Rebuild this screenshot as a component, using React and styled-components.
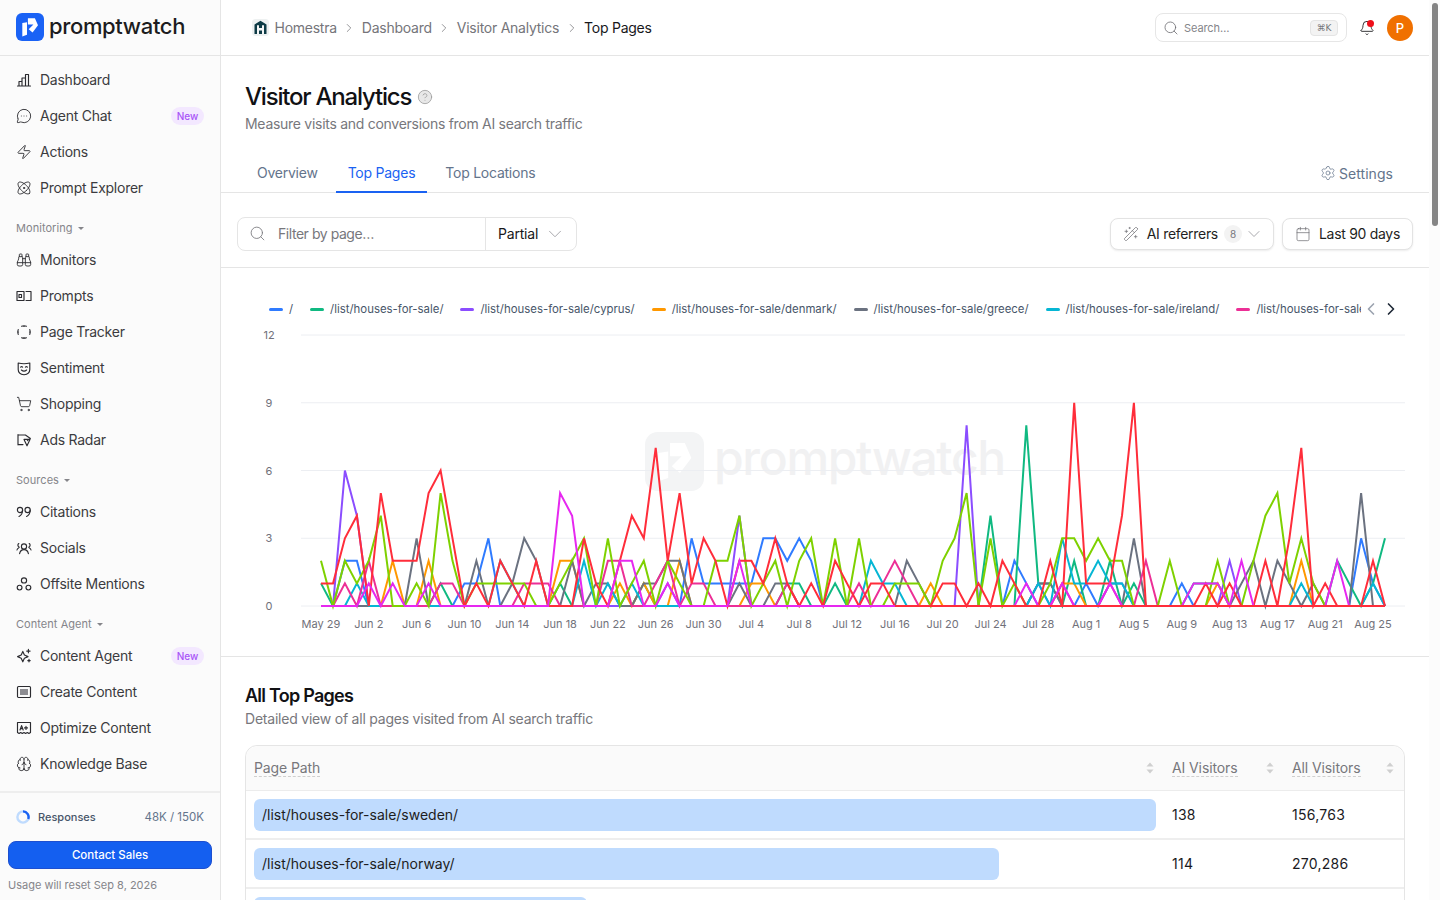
import React from 'react'
import styled, { createGlobalStyle } from 'styled-components'
import {
  Atom, Bell, Binoculars, Brain, Calendar, ChevronDown, ChevronLeft, ChevronRight,
  CircleHelp, MessageCircleMore, Search, Settings, ShoppingCart, WandSparkles, Zap,
} from 'lucide-react'

const GlobalStyle = createGlobalStyle`
  html, body { margin: 0; height: 100%; overflow: hidden; }
  body { font-family: Inter, "Liberation Sans", sans-serif; color: #18181b; background: #fff; -webkit-font-smoothing: antialiased; }
  * { box-sizing: border-box; }
`

const Shell = styled.div`
  display: flex;
  height: 100vh;
`

const Sidebar = styled.aside`
  width: 221px;
  flex: none;
  display: flex;
  flex-direction: column;
  background: #fbfbfb;
  border-right: 1px solid #e5e5e5;
`

const Brand = styled.div`
  height: 56px;
  flex: none;
  display: flex;
  align-items: center;
  gap: 5px;
  padding: 0 0 2px 16px;
  border-bottom: 1px solid #e5e5e5;
`

const BrandName = styled.span`
  margin-bottom: 1px;
  font-size: 22px;
  font-weight: 500;
  letter-spacing: -0.35px;
  color: #1c1c20;
`

const Nav = styled.nav`
  flex: 1;
  padding: 6px 8px 0;
`

const NavItem = styled.div`
  height: 36px;
  display: flex;
  align-items: center;
  gap: 8px;
  padding: 0 8px 1px;
  font-size: 14px;
  letter-spacing: -0.25px;
  color: #3b3b40;
  svg { flex: none; color: #2b2b30; }
`

const NavLabel = styled.span`
  flex: 1;
`

const NewBadge = styled.span`
  width: 33px;
  height: 18px;
  border-radius: 9px;
  display: flex;
  align-items: center;
  justify-content: center;
  font-size: 10px;
  font-weight: 500;
  letter-spacing: 0;
  color: #a855f7;
  background: #f3e8ff;
`

const GroupLabel = styled.div`
  height: 36px;
  padding: 14px 0 0 8px;
  display: flex;
  align-items: flex-start;
  gap: 5px;
  font-size: 11px;
  line-height: 16px;
  letter-spacing: 0.05px;
  color: #85858a;
`

const Caret = styled.i`
  margin-top: 7px;
  border: 3px solid transparent;
  border-top: 3px solid #85858a;
  border-bottom: 0;
`

const SideFoot = styled.div`
  flex: none;
  height: 109px;
  padding: 14px 8px 0;
  border-top: 2px solid #eeeeee;
`

const UsageRow = styled.div`
  height: 20px;
  display: flex;
  align-items: center;
  gap: 8px;
  padding: 0 8px;
  font-size: 11.5px;
  color: #64748b;
`

const UsageName = styled.span`
  flex: 1;
  font-size: 11px;
  font-weight: 500;
  color: #475569;
`

const ContactButton = styled.button`
  display: block;
  width: 100%;
  height: 28px;
  margin-top: 14px;
  border: 1px solid #1d4fd0;
  border-radius: 8px;
  background: #145ff0;
  color: #fff;
  font: 500 11.5px Inter, sans-serif;
`

const ResetNote = styled.div`
  margin-top: 8px;
  font-size: 11px;
  line-height: 16px;
  color: #85858a;
`

const Main = styled.main`
  flex: 1;
  min-width: 0;
  display: flex;
  overflow: hidden;
`

const Page = styled.div`
  flex: 1;
  min-width: 0;
`

const ScrollRail = styled.div`
  flex: none;
  width: 11px;
  padding: 3px 2px 0 3px;
  background: #fcfcfc;
`

const ScrollThumb = styled.div`
  height: 223px;
  border-radius: 3px;
  background: #858585;
`

const TopBar = styled.header`
  height: 56px;
  display: flex;
  align-items: center;
  padding: 0 16px 0 31px;
  border-bottom: 1px solid #e5e5e5;
`

const Crumbs = styled.div`
  flex: 1;
  display: flex;
  align-items: center;
  gap: 5.5px;
  font-size: 14px;
  letter-spacing: -0.25px;
  color: #75757a;
  svg { color: #75757a; }
`

const Crumb = styled.span`
  color: ${p => (p.$current ? '#18181b' : '#75757a')};
`

const SearchBox = styled.div`
  width: 192px;
  height: 29px;
  display: flex;
  align-items: center;
  gap: 5px;
  padding: 0 8px 0 7px;
  border: 1px solid #e6e6e6;
  border-radius: 8px;
  font-size: 11px;
  letter-spacing: -0.1px;
  color: #85858a;
  svg { color: #6b6b70; }
`

const SearchText = styled.span`
  flex: 1;
`

const Kbd = styled.kbd`
  width: 28px;
  height: 16px;
  border: 1px solid #e4e4e4;
  border-radius: 4px;
  background: #f3f3f3;
  font: 500 9px "DejaVu Sans", sans-serif;
  line-height: 14px;
  text-align: center;
  color: #75757a;
`

const BellWrap = styled.div`
  position: relative;
  width: 16px;
  height: 16px;
  margin: 0 12px;
  svg { display: block; }
`

const BellDot = styled.i`
  position: absolute;
  top: 0;
  right: 1px;
  width: 7px;
  height: 7px;
  border-radius: 50%;
  background: #ef0f1a;
`

const Avatar = styled.div`
  width: 26px;
  height: 26px;
  border-radius: 50%;
  background: #f07000;
  color: #fff;
  font-size: 13px;
  font-weight: 500;
  display: flex;
  align-items: center;
  justify-content: center;
`

const PageHead = styled.section`
  padding: 25px 24px 0;
`

const TitleRow = styled.div`
  display: flex;
  align-items: center;
  gap: 6px;
  svg { color: #9a9a9a; fill: #e8e8e8; }
`

const Title = styled.h1`
  margin: 0;
  font-size: 24px;
  line-height: 32px;
  font-weight: 500;
  letter-spacing: -1.2px;
  color: #111114;
`

const Sub = styled.p`
  margin: 1px 0 0;
  font-size: 14px;
  line-height: 20px;
  letter-spacing: -0.28px;
  color: #77777c;
`

const SectionSub = styled(Sub)`
  letter-spacing: -0.22px;
`

const TabBar = styled.div`
  margin-top: 22px;
  height: 37px;
  display: flex;
  align-items: flex-start;
  gap: 6px;
  padding: 0 36px 0 24px;
  border-bottom: 1px solid #e5e5e5;
`

const Tab = styled.div`
  height: 37px;
  padding: 0 12px 2px;
  display: flex;
  align-items: center;
  font-size: 14px;
  letter-spacing: -0.24px;
  color: ${p => (p.$active ? '#1a62f2' : '#64748b')};
  border-bottom: 2px solid ${p => (p.$active ? '#1a62f2' : 'transparent')};
`

const SettingsLink = styled.div`
  margin-left: auto;
  height: 34px;
  display: flex;
  align-items: center;
  gap: 3px;
  font-size: 14px;
  letter-spacing: 0.05px;
  color: #64748b;
`

const FilterRow = styled.div`
  height: 75px;
  padding: 8px 16px 0;
  display: flex;
  align-items: center;
  gap: 8px;
  border-bottom: 1px solid #e5e5e5;
`

const FilterBox = styled.div`
  width: 340px;
  height: 34px;
  margin-right: auto;
  display: flex;
  align-items: center;
  border: 1px solid #e5e5e5;
  border-radius: 8px;
  font-size: 14px;
  letter-spacing: -0.2px;
`

const FilterInput = styled.div`
  width: 248px;
  height: 100%;
  display: flex;
  align-items: center;
  gap: 12px;
  padding: 0 0 1px 11px;
  letter-spacing: -0.45px;
  color: #77777c;
  border-right: 1px solid #e5e5e5;
  svg { color: #77777c; }
`

const MatchSelect = styled.div`
  flex: 1;
  display: flex;
  align-items: center;
  justify-content: space-between;
  padding: 0 10px 1px 12px;
  svg { color: #a0a0a5; }
`

const ToolButton = styled.div`
  height: 32px;
  display: flex;
  align-items: center;
  gap: 8px;
  padding: 0 12px 1px;
  border: 1px solid #e3e3e3;
  border-radius: 8px;
  background: #fff;
  box-shadow: 0 1px 2px rgba(0, 0, 0, 0.08);
  font-size: 14px;
  letter-spacing: -0.3px;
  color: #1f1f23;
  svg { color: #6f6f74; }
`

const CountPill = styled.span`
  width: 18px;
  height: 18px;
  margin-left: -2px;
  border-radius: 50%;
  background: #f3f3f3;
  font-size: 10px;
  line-height: 18px;
  text-align: center;
  color: #77777c;
`

const ButtonChevron = styled(ChevronDown)`
  margin: 0 -3px 0 -6px;
  color: #a0a0a5 !important;
`

const ChartSection = styled.section`
  position: relative;
  padding: 30px 0 16px;
  border-bottom: 1px solid #e5e5e5;
`

const LegendRow = styled.div`
  height: 22px;
  margin-left: 48px;
  display: flex;
  align-items: center;
`

const LegendClip = styled.div`
  flex: none;
  width: 1092px;
  overflow: hidden;
  display: flex;
  align-items: center;
  gap: 17px;
`

const LegendItem = styled.div`
  flex: none;
  display: flex;
  align-items: center;
  gap: 6px;
  font-size: 11.4px;
  color: #475569;
`

const LegendDash = styled.i`
  width: 14px;
  height: 3px;
  border-radius: 2px;
  background: ${p => p.$color};
`

const LegendArrows = styled.div`
  display: flex;
`

const Watermark = styled.div`
  position: absolute;
  left: 424px;
  top: 164px;
  display: flex;
  align-items: center;
  gap: 10px;
  font-size: 48px;
  font-weight: 500;
  letter-spacing: -1.3px;
  color: #f1f1f2;
`

const WatermarkName = styled.span`
  margin-top: -8px;
`

const ChartSvg = styled.svg`
  position: relative;
  display: block;
  margin-top: 5px;
  text {
    font-family: Inter, "Liberation Sans", sans-serif;
    font-size: 11px;
    fill: #71717a;
  }
`

const TableSection = styled.section`
  padding: 27px 24px 0;
`

const SectionTitle = styled.h2`
  margin: 0;
  font-size: 18px;
  line-height: 24px;
  font-weight: 600;
  letter-spacing: -0.75px;
  color: #111114;
`

const Table = styled.div`
  margin-top: 16px;
  border: 1px solid #e5e5e5;
  border-radius: 12px 12px 0 0;
`

const HeadRow = styled.div`
  display: grid;
  grid-template-columns: 1fr 120px 120px;
  height: 45px;
  background: #fafafa;
  border-radius: 12px 12px 0 0;
  border-bottom: 1px solid #ececec;
`

const HeadCell = styled.div`
  display: flex;
  align-items: center;
  justify-content: space-between;
  padding: 0 10px 0 8px;
  font-size: 14px;
  letter-spacing: -0.1px;
  color: #77777c;
`

const HeadLabel = styled.span`
  line-height: 17px;
  border-bottom: 1px dashed #cfcfcf;
`

const BodyRow = styled.div`
  display: grid;
  grid-template-columns: 1fr 120px 120px;
  height: 49px;
  align-items: center;
  border-bottom: 2px solid #eeeeee;
  font-size: 14px;
`

const BarCell = styled.div`
  padding: 0 8px;
`

const PathBar = styled.div`
  height: 32px;
  padding-left: 8px;
  display: flex;
  align-items: center;
  white-space: nowrap;
  border-radius: 6px;
  background: #bfdbfe;
  color: #1d1d21;
`

const NumCell = styled.div`
  padding-left: 8px;
  letter-spacing: 0.25px;
  color: #1a1a1e;
`

const stroke = { fill: 'none', stroke: 'currentColor', strokeWidth: 1.15, strokeLinecap: 'round', strokeLinejoin: 'round' }

function Ico({ children }) {
  return <svg width="16" height="16" viewBox="0 0 16 16" {...stroke}>{children}</svg>
}

const BarsIcon = () => <Ico><path d="M1.5 14h13M3 14V9.5h3V14M6 14V6h3.5v8M9.5 14V2.5h3V14" /></Ico>
const PromptsIcon = () => <Ico><path d="M1 3.5h7v9H1zM10 3.5h5M15 3.5v9M10 12.5h5" /><rect x="3" y="6.5" width="2.5" height="3" /></Ico>
const TrackerIcon = () => <Ico><path d="M5.6 2.2a6.3 6.3 0 0 1 4.8 0M13.8 5.6a6.3 6.3 0 0 1 0 4.8M10.4 13.8a6.3 6.3 0 0 1-4.8 0M2.2 10.4a6.3 6.3 0 0 1 0-4.8M8 1.7v.8M8 13.5v.8M1.7 8h.8M13.5 8h.8" /></Ico>
const MaskIcon = () => <Ico><path d="M2.2 3c3.8 1 7.8 1 11.6 0v6.4c0 3-2.6 4.9-5.8 5.3-3.2-.4-5.8-2.3-5.8-5.3z" /><path d="M4.6 7.2c.6-.6 1.4-.6 2 0M9.4 7.2c.6-.6 1.4-.6 2 0M5.4 10c1.6 1.4 3.6 1.4 5.2 0" /></Ico>
const CartIcon = () => <ShoppingCart size={16} strokeWidth={1.35} />
const RadarIcon = () => <Ico><path d="M2 2.6v10.2M2 3h7.4l5 3.4-3 2.2M2 12.6h5" /><path d="M8 7.4h6l-3 6.4z" /></Ico>
const QuoteIcon = () => <Ico><circle cx="4" cy="6" r="2.6" /><path d="M6.6 6c0 3-1.4 5.4-3.6 6.4" /><circle cx="11.6" cy="6" r="2.6" /><path d="M14.2 6c0 3-1.4 5.4-3.6 6.4" /></Ico>
const SocialIcon = () => <Ico><circle cx="8" cy="6.4" r="2.6" /><path d="M3.6 13.6c.6-3 2.4-4 4.4-4s3.8 1 4.4 4M3.4 7.2a2 2 0 0 1-.6-3.6M1 10c.2-1 .8-1.7 1.6-2M12.6 7.2a2 2 0 0 0 .6-3.6M15 10c-.2-1-.8-1.7-1.6-2" /></Ico>
const NodesIcon = () => <Ico><circle cx="8" cy="4.4" r="2.6" /><circle cx="3.6" cy="11.6" r="2.4" /><circle cx="12.4" cy="11.6" r="2.4" /></Ico>
const StarIcon = () => <Ico><path d="M6.8 3.4 8.4 7l3.6 1.6-3.6 1.6-1.6 3.6-1.6-3.6L1.6 8.6 5.2 7z" /><path d="M12.4 1.4v3.4M10.7 3.1h3.4M13 11.4v2.4M11.8 12.6h2.4" /></Ico>
const CreateIcon = () => <Ico><rect x="1.5" y="2.5" width="13" height="11" rx="1" /><rect x="4" y="5" width="8" height="6" fill="#8d8d92" stroke="none" /></Ico>
const OptimizeIcon = () => <Ico><path d="M1.5 12.2V2.5h13v9.7M1.5 12.5l1.6 1 1.6-1 1.6 1 1.7-1 1.6 1 1.7-1 1.6 1 1.6-1" /><path d="M4 10l1.6-4.4L7.2 10M4.6 8.6h2M10 6.4v3M8.5 7.9h3" /></Ico>

const LogoMark = ({ size, tile, glyph }) => (
  <svg width={size} height={size} viewBox="0 0 28 28">
    <rect width="28" height="28" rx="6" fill={tile} />
    <path d="M11.9 5.2h7l3.1 7.1-5.4 7.2-3.9-3.2 4.7-4.8h-5.5z" fill={glyph} />
    <path d="M6.3 10l4.7-.8v12.6l-4.7 1.6z" fill={glyph} />
  </svg>
)

const HomeTile = () => (
  <svg width="17" height="17" viewBox="0 0 17 17">
    <rect width="17" height="17" rx="3.5" fill="#eef1f1" />
    <path d="M2.5 5.6 8.5 1.8l6 3.8v9.4h-12z" fill="#0e3b46" />
    <path d="M5 6.2h2v2.9h3V6.2h2V15h-2v-3.4H7V15H5z" fill="#f4f6f6" />
  </svg>
)

const SortIcon = () => (
  <svg width="8" height="12" viewBox="0 0 8 12"><path d="M4 .5 7.5 4.5h-7zM4 11.5.5 7.5h7z" fill="#cfcfcf" /></svg>
)

const UsageRing = () => (
  <svg width="14" height="14" viewBox="0 0 14 14" fill="none">
    <circle cx="7" cy="7" r="5.6" stroke="#bfdbfe" strokeWidth="2.4" />
    <path d="M7 1.4A5.6 5.6 0 0 1 12.2 9" stroke="#1a62f2" strokeWidth="2.4" />
  </svg>
)

const navGroups = [
  { items: [
    [<BarsIcon />, 'Dashboard'],
    [<MessageCircleMore size={16} strokeWidth={1.35} />, 'Agent Chat', true],
    [<Zap size={16} strokeWidth={1.35} />, 'Actions'],
    [<Atom size={16} strokeWidth={1.35} />, 'Prompt Explorer'],
  ] },
  { label: 'Monitoring', items: [
    [<Binoculars size={16} strokeWidth={1.35} />, 'Monitors'],
    [<PromptsIcon />, 'Prompts'],
    [<TrackerIcon />, 'Page Tracker'],
    [<MaskIcon />, 'Sentiment'],
    [<CartIcon />, 'Shopping'],
    [<RadarIcon />, 'Ads Radar'],
  ] },
  { label: 'Sources', items: [
    [<QuoteIcon />, 'Citations'],
    [<SocialIcon />, 'Socials'],
    [<NodesIcon />, 'Offsite Mentions'],
  ] },
  { label: 'Content Agent', items: [
    [<StarIcon />, 'Content Agent', true],
    [<CreateIcon />, 'Create Content'],
    [<OptimizeIcon />, 'Optimize Content'],
    [<Brain size={16} strokeWidth={1.35} />, 'Knowledge Base'],
  ] },
]

const legend = [
  ['/', '#2f7bff'],
  ['/list/houses-for-sale/', '#10b981'],
  ['/list/houses-for-sale/cyprus/', '#8b4dff'],
  ['/list/houses-for-sale/denmark/', '#ff9800'],
  ['/list/houses-for-sale/greece/', '#6b7280'],
  ['/list/houses-for-sale/ireland/', '#06b6d4'],
  ['/list/houses-for-sale/italy/', '#ec2f96'],
]

// visits per day, only the non-zero days are listed
const series = [
  ['#2f7bff', { 2: 2, 3: 2, 12: 1, 13: 1, 14: 3, 31: 3, 32: 1, 33: 1, 34: 1, 35: 1, 36: 1, 37: 3, 38: 3, 39: 2, 40: 3, 41: 2, 58: 2, 59: 1, 64: 1, 66: 1, 67: 1, 72: 1, 87: 3, 88: 1 }],
  ['#10b981', { 0: 1, 10: 1, 20: 1, 27: 1, 39: 1, 40: 1, 43: 1, 56: 4, 59: 8, 60: 1, 61: 1, 63: 2, 66: 2, 68: 1, 73: 1, 74: 1, 75: 1, 85: 2, 86: 1, 88: 1, 89: 3 }],
  ['#8b4dff', { 2: 6, 3: 4, 29: 1, 35: 4, 54: 8, 60: 1, 76: 2 }],
  ['#ff9800', { 6: 2, 9: 2, 20: 2, 21: 2, 25: 1, 27: 1, 30: 2, 36: 1, 37: 1, 51: 1, 62: 1, 63: 1, 75: 1, 82: 2 }],
  ['#6b7280', { 8: 3, 13: 2, 16: 1, 17: 3, 18: 2, 21: 2, 23: 1, 24: 1, 27: 1, 28: 1, 29: 2, 30: 2, 35: 1, 38: 1, 39: 1, 49: 2, 50: 1, 60: 1, 61: 1, 68: 3, 77: 1, 78: 2, 80: 2, 81: 1, 83: 1, 87: 5 }],
  ['#06b6d4', { 3: 1, 15: 2, 16: 1, 22: 2, 24: 1, 26: 1, 46: 2, 47: 1, 48: 1, 60: 1, 62: 3, 63: 1, 64: 1, 65: 2, 66: 1, 67: 1, 82: 1, 88: 1 }],
  ['#ec2f96', { 2: 1, 4: 2, 10: 1, 11: 1, 17: 1, 18: 1, 19: 1, 24: 2, 25: 2, 28: 1, 29: 2, 31: 1, 32: 1, 39: 1, 45: 1, 47: 1, 48: 2, 49: 1, 62: 1, 66: 1, 69: 2 }],
  ['#7ed100', { 0: 2, 2: 2, 3: 1, 4: 2, 5: 4, 8: 1, 10: 5, 11: 2, 13: 1, 14: 1, 15: 1, 16: 1, 17: 1, 20: 1, 21: 2, 22: 3, 24: 3, 26: 1, 27: 2, 29: 2, 30: 1, 33: 2, 34: 2, 35: 4, 37: 1, 38: 2, 40: 2, 41: 3, 43: 3, 45: 3, 48: 1, 49: 1, 50: 1, 52: 2, 53: 3, 54: 5, 56: 3, 58: 1, 61: 1, 62: 3, 63: 3, 64: 2, 65: 3, 66: 2, 67: 2, 71: 2, 75: 2, 78: 2, 79: 4, 80: 5, 81: 1, 82: 3, 83: 1 }],
  ['#ff2d3a', { 0: 1, 1: 1, 2: 3, 3: 4, 5: 5, 6: 2, 7: 2, 8: 2, 9: 5, 10: 6, 11: 3, 13: 1, 15: 2, 16: 1, 18: 2, 22: 3, 23: 1, 25: 2, 26: 4, 27: 3, 28: 7, 29: 2, 30: 5, 31: 1, 32: 3, 33: 2, 35: 2, 36: 2, 37: 1, 38: 3, 39: 1, 41: 1, 43: 2, 44: 1, 46: 1, 47: 1, 52: 1, 53: 1, 55: 1, 57: 2, 58: 1, 61: 2, 63: 9, 64: 1, 65: 1, 66: 1, 67: 4, 68: 9, 74: 1, 76: 1, 79: 2, 81: 3, 82: 7, 84: 1, 88: 2 }],
  ['#e628f0', { 4: 1, 6: 1, 9: 1, 20: 5, 21: 4, 25: 2, 26: 2, 29: 1, 35: 2, 59: 1, 62: 1, 66: 1, 73: 1, 74: 1, 75: 1, 77: 2, 85: 2 }],
]

const days = ['May 29', 'Jun 2', 'Jun 6', 'Jun 10', 'Jun 14', 'Jun 18', 'Jun 22', 'Jun 26', 'Jun 30', 'Jul 4', 'Jul 8', 'Jul 12', 'Jul 16', 'Jul 20', 'Jul 24', 'Jul 28', 'Aug 1', 'Aug 5', 'Aug 9', 'Aug 13', 'Aug 17', 'Aug 21', 'Aug 25']

const xAt = i => 321 + i * 11.955
const yAt = v => 606 - v * 22.58

const linePoints = values => Array.from({ length: 90 }, (_, i) => `${xAt(i).toFixed(1)},${yAt(values[i] || 0).toFixed(1)}`).join(' ')

const rows = [
  ['/list/houses-for-sale/sweden/', 138, '156,763'],
  ['/list/houses-for-sale/norway/', 114, '270,286'],
  ['/list/houses-for-sale/spain/', 51, '98,412'],
]

function VisitsChart() {
  return (
    <ChartSvg width="1208" height="315" viewBox="221 325 1208 315">
      {[0, 3, 6, 9, 12].map(v => (
        <g key={v}>
          <line x1="301" x2="1405" y1={yAt(v)} y2={yAt(v)} stroke="#eceef2" strokeWidth="1" />
          <text x="269" y={yAt(v) + 4} textAnchor="middle">{v}</text>
        </g>
      ))}
      {series.map(([color, values]) => (
        <polyline key={color} points={linePoints(values)} fill="none" stroke={color} strokeWidth="2" strokeLinejoin="miter" />
      ))}
      <line x1={xAt(48)} x2={xAt(89)} y1="606" y2="606" stroke="#ff2d3a" strokeWidth="2" />
      {days.map((d, k) => (
        <text key={d} x={xAt(k * 4)} y="628" textAnchor="middle">{d}</text>
      ))}
    </ChartSvg>
  )
}

export default function App() {
  return (
    <Shell>
      <GlobalStyle />
      <Sidebar>
        <Brand>
          <LogoMark size={28} tile="#1a62f5" glyph="#fff" />
          <BrandName>promptwatch</BrandName>
        </Brand>
        <Nav>
          {navGroups.map((g, idx) => (
            <div key={idx}>
              {g.label && <GroupLabel>{g.label}<Caret /></GroupLabel>}
              {g.items.map(([icon, name, isNew]) => (
                <NavItem key={name}>
                  {icon}
                  <NavLabel>{name}</NavLabel>
                  {isNew && <NewBadge>New</NewBadge>}
                </NavItem>
              ))}
            </div>
          ))}
        </Nav>
        <SideFoot>
          <UsageRow>
            <UsageRing />
            <UsageName>Responses</UsageName>
            <span>48K / 150K</span>
          </UsageRow>
          <ContactButton>Contact Sales</ContactButton>
          <ResetNote>Usage will reset Sep 8, 2026</ResetNote>
        </SideFoot>
      </Sidebar>
      <Main>
        <Page>
          <TopBar>
            <Crumbs>
              <HomeTile />
              <Crumb>Homestra</Crumb>
              <ChevronRight size={14} strokeWidth={1.3} />
              <Crumb>Dashboard</Crumb>
              <ChevronRight size={14} strokeWidth={1.3} />
              <Crumb>Visitor Analytics</Crumb>
              <ChevronRight size={14} strokeWidth={1.3} />
              <Crumb $current>Top Pages</Crumb>
            </Crumbs>
            <SearchBox>
              <Search size={16} strokeWidth={1.2} />
              <SearchText>Search…</SearchText>
              <Kbd>⌘K</Kbd>
            </SearchBox>
            <BellWrap>
              <Bell size={16} strokeWidth={1.3} />
              <BellDot />
            </BellWrap>
            <Avatar>P</Avatar>
          </TopBar>
          <PageHead>
            <TitleRow>
              <Title>Visitor Analytics</Title>
              <CircleHelp size={16} strokeWidth={1.2} />
            </TitleRow>
            <Sub>Measure visits and conversions from AI search traffic</Sub>
          </PageHead>
          <TabBar>
            <Tab>Overview</Tab>
            <Tab $active>Top Pages</Tab>
            <Tab>Top Locations</Tab>
            <SettingsLink><Settings size={16} strokeWidth={1.1} />Settings</SettingsLink>
          </TabBar>
          <FilterRow>
            <FilterBox>
              <FilterInput><Search size={17} strokeWidth={1.2} />Filter by page…</FilterInput>
              <MatchSelect>Partial<ChevronDown size={22} strokeWidth={1} /></MatchSelect>
            </FilterBox>
            <ToolButton>
              <WandSparkles size={16} strokeWidth={1.1} />
              AI referrers
              <CountPill>8</CountPill>
              <ButtonChevron size={20} strokeWidth={1.1} />
            </ToolButton>
            <ToolButton>
              <Calendar size={16} strokeWidth={1.1} />
              <span>Last 90 days</span>
            </ToolButton>
          </FilterRow>
          <ChartSection>
            <Watermark>
              <LogoMark size={59} tile="#f3f4f5" glyph="#fff" />
              <WatermarkName>promptwatch</WatermarkName>
            </Watermark>
            <LegendRow>
              <LegendClip>
                {legend.map(([name, color]) => (
                  <LegendItem key={name}><LegendDash $color={color} />{name}</LegendItem>
                ))}
              </LegendClip>
              <LegendArrows>
                <ChevronLeft size={20} strokeWidth={2} color="#9ca3af" />
                <ChevronRight size={20} strokeWidth={2} color="#1f2937" />
              </LegendArrows>
            </LegendRow>
            <VisitsChart />
          </ChartSection>
          <TableSection>
            <SectionTitle>All Top Pages</SectionTitle>
            <SectionSub>Detailed view of all pages visited from AI search traffic</SectionSub>
            <Table>
              <HeadRow>
                <HeadCell><HeadLabel>Page Path</HeadLabel><SortIcon /></HeadCell>
                <HeadCell><HeadLabel>AI Visitors</HeadLabel><SortIcon /></HeadCell>
                <HeadCell><HeadLabel>All Visitors</HeadLabel><SortIcon /></HeadCell>
              </HeadRow>
              {rows.map(([path, ai, all]) => (
                <BodyRow key={path}>
                  <BarCell><PathBar style={{ width: `${(ai / 138) * 100}%` }}>{path}</PathBar></BarCell>
                  <NumCell>{ai}</NumCell>
                  <NumCell>{all}</NumCell>
                </BodyRow>
              ))}
            </Table>
          </TableSection>
        </Page>
        <ScrollRail><ScrollThumb /></ScrollRail>
      </Main>
    </Shell>
  )
}
